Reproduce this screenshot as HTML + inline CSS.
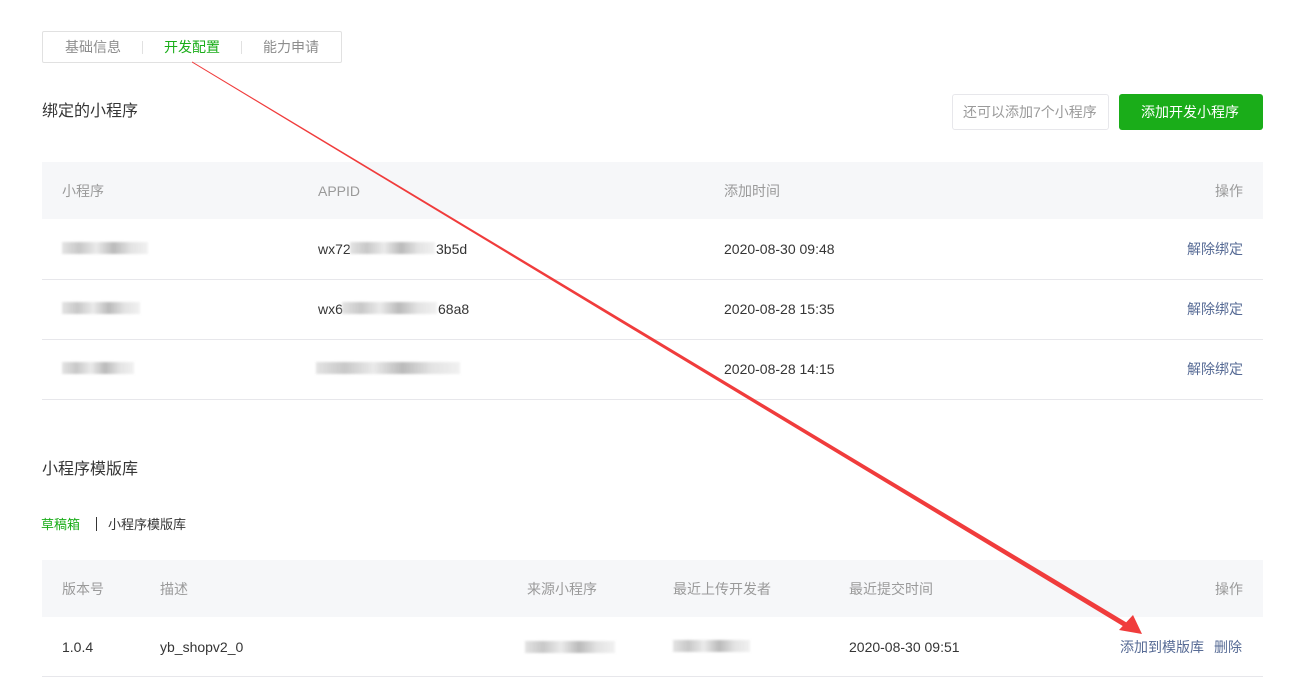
<!DOCTYPE html>
<html><head><meta charset="utf-8"><style>
*{margin:0;padding:0;box-sizing:border-box}
body{width:1291px;height:685px;background:#fff;position:relative;overflow:hidden;font-family:"Liberation Sans","Noto Sans CJK SC",sans-serif;font-size:14px;color:#353535}
.a{position:absolute;white-space:nowrap;line-height:16px}
.g{color:#9a9a9a}
.l{color:#576b95}
.bar{position:absolute;left:42px;width:1221px;background:#f6f7f9}
.line{position:absolute;left:42px;width:1221px;height:1px;background:#e7e7eb}
.blur{position:absolute;height:12px;background:linear-gradient(90deg,#ddd,#bbb 20%,#e6e6e6 40%,#aaa 60%,#ddd 80%,#eee);filter:blur(1px);opacity:.8}
</style></head><body>
<div style="position:absolute;left:42px;top:31px;width:300px;height:32px;border:1px solid #e1e1e1;border-radius:2px"></div>
<div class="a g" style="left:65px;top:39px;color:#8d8d8d">基础信息</div>
<div style="position:absolute;left:142px;top:41px;width:1px;height:13px;background:#e1e1e1"></div>
<div class="a" style="left:164px;top:39px;color:#1aad19">开发配置</div>
<div style="position:absolute;left:241px;top:41px;width:1px;height:13px;background:#e1e1e1"></div>
<div class="a" style="left:263px;top:39px;color:#8d8d8d">能力申请</div>

<div class="a" style="left:42px;top:104px;font-size:16px;color:#353535">绑定的小程序</div>
<div style="position:absolute;left:952px;top:94px;width:157px;height:36px;border:1px solid #e7e7eb;border-radius:3px"></div>
<div class="a g" style="left:963px;top:104px;font-size:14px">还可以添加7个小程序</div>
<div style="position:absolute;left:1119px;top:94px;width:144px;height:36px;background:#1aad19;border-radius:3px"></div>
<div class="a" style="left:1141px;top:104px;color:#fff;font-size:14px">添加开发小程序</div>

<div class="bar" style="top:162px;height:57px"></div>
<div class="a g" style="left:62px;top:183px">小程序</div>
<div class="a g" style="left:318px;top:183px">APPID</div>
<div class="a g" style="left:724px;top:183px">添加时间</div>
<div class="a g" style="left:1215px;top:183px">操作</div>

<div class="blur" style="left:62px;top:242px;width:86px"></div>
<div class="a" style="left:318px;top:241px">wx72</div><div class="blur" style="left:350px;top:242px;width:85px"></div><div class="a" style="left:436px;top:241px">3b5d</div>
<div class="a" style="left:724px;top:241px">2020-08-30 09:48</div>
<div class="a l" style="left:1187px;top:241px">解除绑定</div>
<div class="line" style="top:279px"></div>
<div class="blur" style="left:62px;top:302px;width:78px"></div>
<div class="a" style="left:318px;top:301px">wx6</div><div class="blur" style="left:342px;top:302px;width:95px"></div><div class="a" style="left:438px;top:301px">68a8</div>
<div class="a" style="left:724px;top:301px">2020-08-28 15:35</div>
<div class="a l" style="left:1187px;top:301px">解除绑定</div>
<div class="line" style="top:339px"></div>
<div class="blur" style="left:62px;top:362px;width:72px"></div>
<div class="blur" style="left:316px;top:362px;width:144px"></div>
<div class="a" style="left:724px;top:361px">2020-08-28 14:15</div>
<div class="a l" style="left:1187px;top:361px">解除绑定</div>
<div class="line" style="top:399px"></div>

<div class="a" style="left:42px;top:462px;font-size:16px">小程序模版库</div>
<div class="a" style="left:41px;top:517px;font-size:13px;color:#1aad19">草稿箱</div>
<div style="position:absolute;left:96px;top:517px;width:1px;height:14px;background:#353535"></div>
<div class="a" style="left:108px;top:517px;font-size:13px">小程序模版库</div>

<div class="bar" style="top:560px;height:57px"></div>
<div class="a g" style="left:62px;top:581px">版本号</div>
<div class="a g" style="left:160px;top:581px">描述</div>
<div class="a g" style="left:527px;top:581px">来源小程序</div>
<div class="a g" style="left:673px;top:581px">最近上传开发者</div>
<div class="a g" style="left:849px;top:581px">最近提交时间</div>
<div class="a g" style="left:1215px;top:581px">操作</div>
<div class="a" style="left:62px;top:639px">1.0.4</div>
<div class="a" style="left:160px;top:639px">yb_shopv2_0</div>
<div class="blur" style="left:525px;top:641px;width:90px"></div>
<div class="blur" style="left:673px;top:640px;width:77px"></div>
<div class="a" style="left:849px;top:639px">2020-08-30 09:51</div>
<div class="a l" style="left:1120px;top:639px">添加到模版库</div>
<div class="a l" style="left:1214px;top:639px">删除</div>
<div class="line" style="top:676px"></div>

<svg style="position:absolute;left:0;top:0" width="1291" height="685">
<polygon points="192,61.5 193,62 1129,624 1126,628 192,62.5" fill="#f03c3c"/>
<polygon points="1142,634 1119,630 1133,615" fill="#f03c3c"/>
</svg>
</body></html>
